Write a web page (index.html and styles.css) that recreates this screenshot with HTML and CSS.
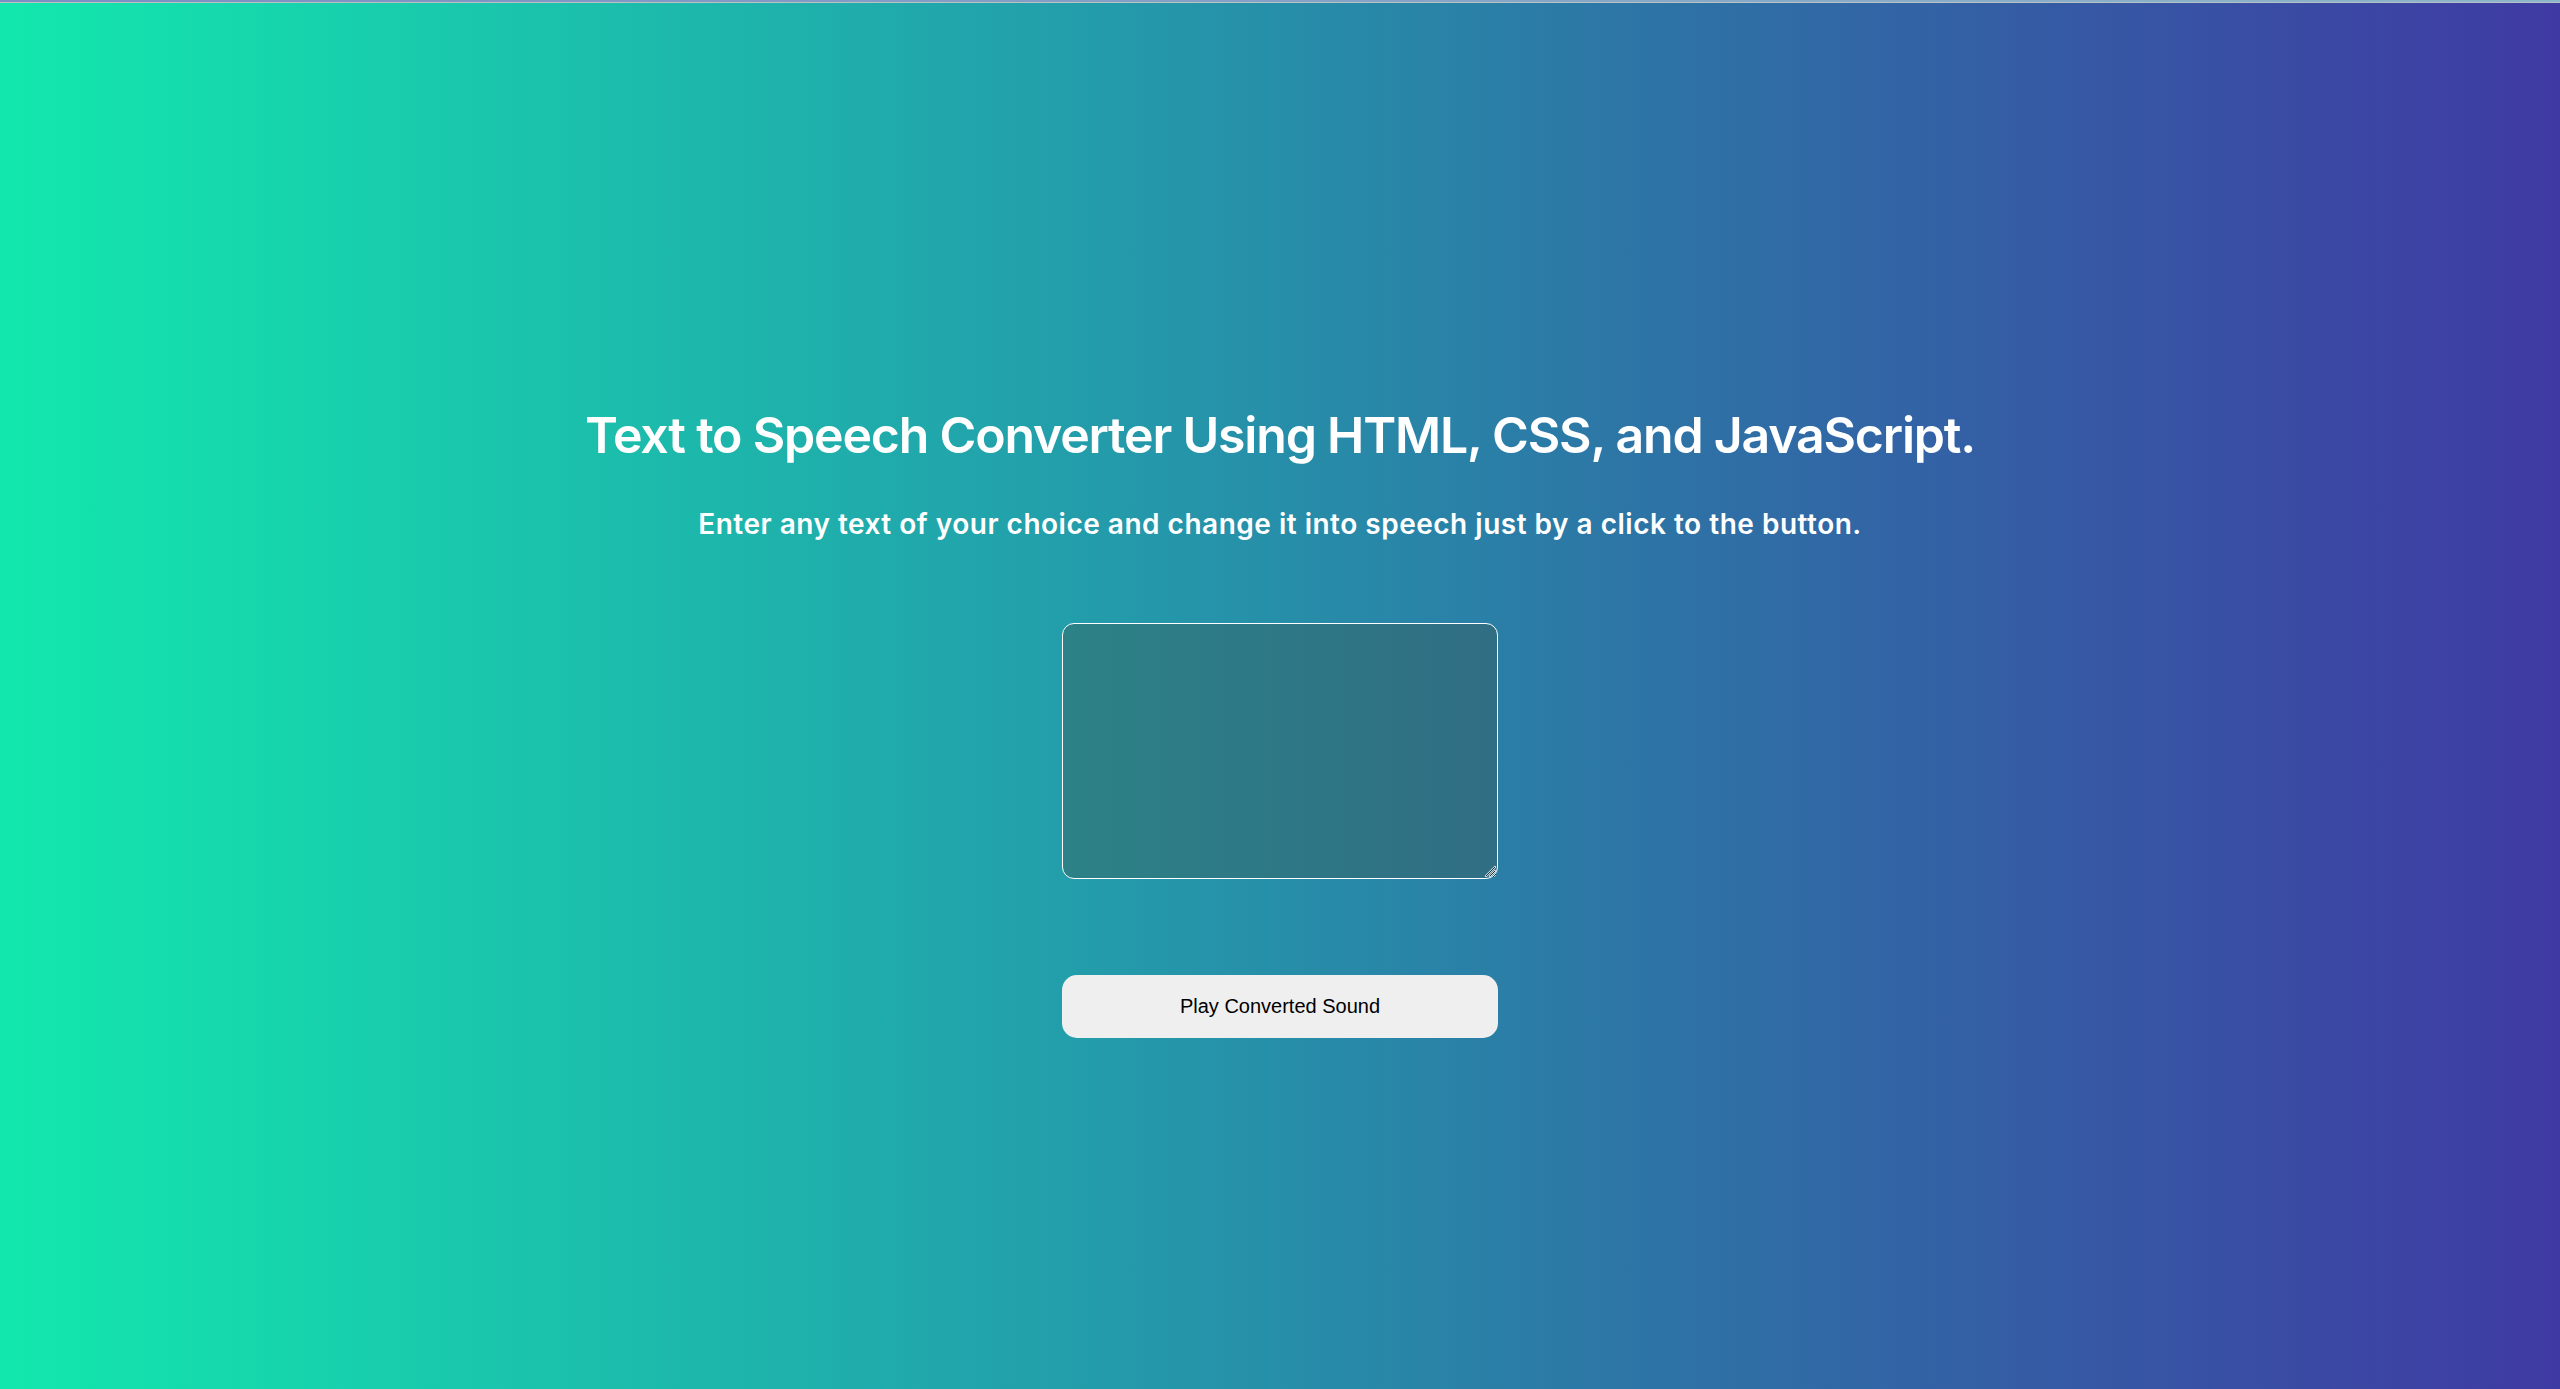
FILE: index.html
```html
<!DOCTYPE html>
<html lang="en">
<head>
<meta charset="utf-8">
<title>Text to Speech Converter</title>
<link rel="stylesheet" href="styles.css">
</head>
<body>
<div class="topline"></div>
<main class="page">
  <h1 class="title">Text to Speech Converter Using HTML, CSS, and JavaScript.</h1>
  <p class="subtitle">Enter any text of your choice and change it into speech just by a click to the button.</p>
  <div class="field">
    <textarea class="input" aria-label="Text to convert"></textarea>
    <svg class="grip" width="12" height="12" viewBox="0 0 12 12" aria-hidden="true">
      <line x1="2" y1="11" x2="11" y2="2" stroke="#d9e3e6" stroke-width="2.2" stroke-linecap="round"/>
      <line x1="2" y1="11" x2="11" y2="2" stroke="#26343a" stroke-width="1"/>
      <line x1="6" y1="11" x2="11" y2="6" stroke="#d9e3e6" stroke-width="2.2" stroke-linecap="round"/>
      <line x1="6" y1="11" x2="11" y2="6" stroke="#26343a" stroke-width="1"/>
    </svg>
  </div>
  <button class="play" type="button">Play Converted Sound</button>
</main>
</body>
</html>
```
FILE: styles.css
```css
html, body {
  margin: 0;
  padding: 0;
}
body {
  min-height: 100vh;
  background: linear-gradient(to right, #12e8ad 0%, #22a1ab 40%, #2c78a6 62%, #3f3aa3 100%);
  font-family: Inter, "Open Sans", sans-serif;
  color: #ffffff;
  overflow: hidden;
}
.topline {
  height: 2px;
  background: linear-gradient(to right, #7b8fc3, #8db5cb);
  border-bottom: 1px solid #b8c4c2;
}
.page {
  display: flex;
  flex-direction: column;
  align-items: center;
  padding-top: 402px;
}
.title {
  margin: 0;
  font-size: 50px;
  line-height: 60px;
  font-weight: 600;
  letter-spacing: -1.2px;
  white-space: nowrap;
}
.subtitle {
  margin: 42px 0 0;
  font-size: 28px;
  line-height: 34px;
  font-weight: 600;
  letter-spacing: 0.5px;
  white-space: nowrap;
}
.field {
  position: relative;
  margin-top: 82px;
}
.input {
  display: block;
  box-sizing: border-box;
  width: 436px;
  height: 256px;
  border: 1px solid #ffffff;
  border-radius: 12px;
  background: rgba(62, 80, 72, 0.36);
  color: #ffffff;
  resize: both;
  outline: none;
}
.grip {
  position: absolute;
  right: 2px;
  bottom: 2px;
  pointer-events: none;
}
.play {
  box-sizing: border-box;
  margin-top: 96px;
  width: 436px;
  height: 63px;
  border: none;
  border-radius: 15px;
  background: #efefef;
  color: #000000;
  font-family: "Liberation Sans", Arial, sans-serif;
  font-size: 20px;
}
```
